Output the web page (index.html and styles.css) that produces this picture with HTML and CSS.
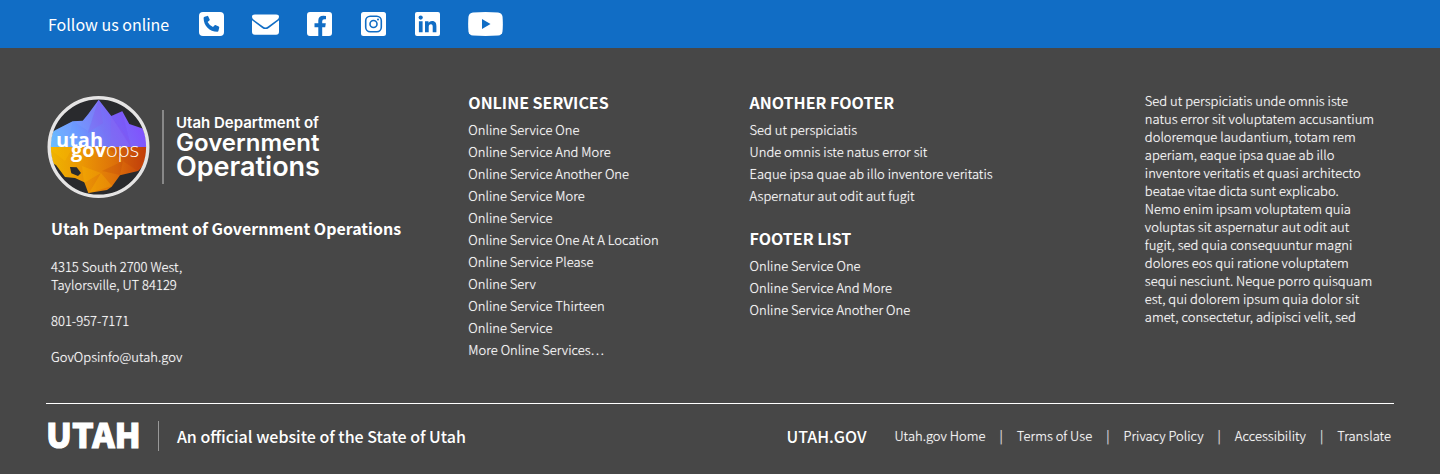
FILE: index.html
```html
<!DOCTYPE html>
<html lang="en">
<head>
<meta charset="utf-8">
<meta name="viewport" content="width=device-width, initial-scale=1">
<title>Utah Department of Government Operations</title>
<link rel="stylesheet" href="styles.css">
</head>
<body>
<footer>
  <section class="social">
    <span class="social-label">Follow us online</span>
    <nav class="social-links" aria-label="Social media">
      <a href="#" aria-label="Phone"><svg width="25" height="24" viewBox="0 0 25 24"><rect width="25" height="24" rx="4" fill="#fff"/><path d="M5.600 4.700 8.300 3.900Q9 3.700 9.300 4.400L10.700 7.600Q10.900 8.200 10.400 8.600L8.600 10Q10.500 13.500 14 15.100L15.400 13.400Q15.800 12.900 16.400 13.100L19.700 14.600Q20.400 15 20.200 15.700L19.400 18.900Q19.200 19.700 18.400 19.700C10.500 19.700 4.600 13.600 4.600 5.900Q4.600 5 5.600 4.700Z" fill="#116dc5"/></svg></a>
      <a href="#" aria-label="Email"><svg width="27" height="21" viewBox="0 0 28 21"><path d="M3 0H25Q28 0 28 2.500Q28 4 26.500 5.300L16.500 12.700Q14 14.500 11.500 12.700L1.500 5.300Q0 4 0 2.500Q0 0 3 0ZM0 6 10.500 14Q14 16.500 17.500 14L28 6V18Q28 21 25 21H3Q0 21 0 18Z" fill="#fff"/></svg></a>
      <a href="#" aria-label="Facebook"><svg width="25" height="24" viewBox="0 0 25 24"><path d="M3 0H22Q25 0 25 3V21Q25 24 22 24H15.200V15.200H18.200L18.800 11.300H15.200V9.200Q15.200 7.200 17.300 7.200H19V4.100Q17.600 3.800 16.300 3.800Q11.300 3.800 11.300 8.600V11.300H7.500V15.200H11.300V24H3Q0 24 0 21V3Q0 0 3 0Z" fill="#fff"/></svg></a>
      <a href="#" aria-label="Instagram"><svg width="25" height="24" viewBox="0 0 25 24"><rect width="25" height="24" rx="2.500" fill="#fff"/><rect x="4.700" y="4.200" width="15.600" height="15.600" rx="4.500" fill="none" stroke="#116dc5" stroke-width="1.600"/><circle cx="12.500" cy="12" r="3.500" fill="none" stroke="#116dc5" stroke-width="1.600"/><circle cx="17" cy="7.600" r="1" fill="#116dc5"/></svg></a>
      <a href="#" aria-label="LinkedIn"><svg width="25" height="24" viewBox="0 0 25 24"><rect width="25" height="24" rx="2" fill="#fff"/><g fill="#116dc5"><circle cx="5.700" cy="5.600" r="2.100"/><path d="M3.900 9.200H7.600V20.300H3.900ZM10 9.200H13.500V10.700Q14.600 8.900 17 8.900C20.600 8.900 21.400 11.200 21.400 14.200V20.300H17.700V14.900C17.700 13.500 17.500 12.200 15.900 12.200C14.200 12.200 13.700 13.400 13.700 14.900V20.300H10Z"/></g></svg></a>
      <a href="#" aria-label="YouTube"><svg width="35" height="24" viewBox="0 0 35 24"><path d="M5 .4Q17.500-.4 30 .4Q34 .8 34.500 4.500Q35.200 12 34.500 19.500Q34 23.200 30 23.600Q17.500 24.400 5 23.600Q1 23.200.5 19.500Q-.2 12 .5 4.500Q1 .8 5 .4Z" fill="#fff"/><path d="M14 7 22.500 12 14 17Z" fill="#116dc5"/></svg></a>
    </nav>
  </section>

  <div class="main">
    <section class="agency">
      <a class="brand" href="#">
        <svg class="emblem" width="103" height="102" viewBox="0 0 103 102" role="img" aria-label="Utah GovOps">
          <defs>
            <linearGradient id="sky" x1="0" y1=".7" x2="1" y2=".5"><stop offset="0" stop-color="#69bdff"/><stop offset=".3" stop-color="#6c98ff"/><stop offset=".55" stop-color="#7775f5"/><stop offset="1" stop-color="#824dff"/></linearGradient>
            <linearGradient id="earth" x1="0" y1="0" x2="1" y2="0"><stop offset="0" stop-color="#efb700"/><stop offset=".35" stop-color="#eb9604"/><stop offset=".65" stop-color="#de7309"/><stop offset="1" stop-color="#c33b0b"/></linearGradient>
            <clipPath id="disc"><circle cx="51.500" cy="51" r="48"/></clipPath>
          </defs>
          <circle cx="51.500" cy="51" r="49" fill="#292a2d"/>
          <g clip-path="url(#disc)">
            <path d="M0 51V39L9 33.700 25.700 25.300 35.700 24.700 41.300 18 51.700 3.700 64.300 20 75.300 15.300 82.300 28 100 34V51Z" fill="url(#sky)"/>
            <path d="M51.700 3.700 41 35 26 25 36 25ZM9 34 26 25 21 44Z" fill="#8ca5ff" opacity=".2"/>
            <path d="M51.700 3.700 56 27 41 37ZM64 20 88 51H63Z" fill="#8a61ef" opacity=".3"/>
            <path d="M75 15 84 51 64 20Z" fill="#713eed" opacity=".2"/>
            <path d="M0 51H102V64L91 75 73 79.300 64.700 90.700 60 94 41.300 97 37.300 86.300 28 82 18 81 9 69 3 66Z" fill="url(#earth)"/>
            <path d="M0 51H26L18 65ZM35 70 54 77 37 87ZM54 77 65 90 42 97Z" fill="#ffc400" opacity=".25"/>
            <path d="M61 52 102 51 91 75 76 65ZM55 75 76 65 73 79Z" fill="#b63708" opacity=".2"/>
            <path d="M23 71 29.700 71.300 34 77 31 80 24.300 77.300Z" fill="#292a2d"/>
          </g>
          <circle cx="51.500" cy="51" r="49.300" fill="none" stroke="#e5e4e4" stroke-width="3.400"/>
          <g class="emblem-text"><text x="9" y="51">utah</text><text x="24" y="61">gov<tspan class="light">ops</tspan></text></g>
        </svg>
        <span class="brand-name"><span class="brand-small">Utah Department of</span><span class="brand-mid">Government</span><span class="brand-large">Operations</span></span>
      </a>
      <div class="contact">
        <h2>Utah Department of Government Operations</h2>
        <address>
          <p>4315 South 2700 West,<br>Taylorsville, UT 84129</p>
          <p>801-957-7171</p>
          <p><a href="mailto:GovOpsinfo@utah.gov">GovOpsinfo@utah.gov</a></p>
        </address>
      </div>
    </section>

    <nav class="links" aria-labelledby="online-services">
      <h2 id="online-services">ONLINE SERVICES</h2>
      <ul>
        <li><a href="#">Online Service One</a></li>
        <li><a href="#">Online Service And More</a></li>
        <li><a href="#">Online Service Another One</a></li>
        <li><a href="#">Online Service More</a></li>
        <li><a href="#">Online Service</a></li>
        <li><a href="#">Online Service One At A Location</a></li>
        <li><a href="#">Online Service Please</a></li>
        <li><a href="#">Online Serv</a></li>
        <li><a href="#">Online Service Thirteen</a></li>
        <li><a href="#">Online Service</a></li>
        <li><a href="#">More Online Services…</a></li>
      </ul>
    </nav>

    <div class="link-stack">
      <nav class="links" aria-labelledby="another-footer">
        <h2 id="another-footer">ANOTHER FOOTER</h2>
        <ul>
          <li><a href="#">Sed ut perspiciatis</a></li>
          <li><a href="#">Unde omnis iste natus error sit</a></li>
          <li><a href="#">Eaque ipsa quae ab illo inventore veritatis</a></li>
          <li><a href="#">Aspernatur aut odit aut fugit</a></li>
        </ul>
      </nav>
      <nav class="links" aria-labelledby="footer-list">
        <h2 id="footer-list">FOOTER LIST</h2>
        <ul>
          <li><a href="#">Online Service One</a></li>
          <li><a href="#">Online Service And More</a></li>
          <li><a href="#">Online Service Another One</a></li>
        </ul>
      </nav>
    </div>

    <p class="about">Sed ut perspiciatis unde omnis iste natus error sit voluptatem accusantium doloremque laudantium, totam rem aperiam, eaque ipsa quae ab illo inventore veritatis et quasi architecto beatae vitae dicta sunt explicabo. Nemo enim ipsam voluptatem quia voluptas sit aspernatur aut odit aut fugit, sed quia consequuntur magni dolores eos qui ratione voluptatem sequi nesciunt. Neque porro quisquam est, qui dolorem ipsum quia dolor sit amet, consectetur, adipisci velit, sed</p>
  </div>

  <div class="bottom">
    <a class="utah" href="#">UTAH</a>
    <span class="official">An official website of the State of Utah</span>
    <nav class="legal" aria-label="Utah.gov">
      <a class="portal" href="#">UTAH.GOV</a>
      <ul>
        <li><a href="#">Utah.gov Home</a></li>
        <li><a href="#">Terms of Use</a></li>
        <li><a href="#">Privacy Policy</a></li>
        <li><a href="#">Accessibility</a></li>
        <li><a href="#">Translate</a></li>
      </ul>
    </nav>
  </div>
</footer>
</body>
</html>
```
FILE: styles.css
```css
* { box-sizing: border-box; }
body {
  margin: 0;
  background: #474747;
  color: #fff;
  font: 300 13px/18px "Noto Sans CJK SC", "Noto Sans", sans-serif;
}
a { color: inherit; text-decoration: none; }
h2, p, ul { margin: 0; padding: 0; }
ul { list-style: none; }
svg { display: block; }

.social {
  display: flex;
  align-items: center;
  gap: 29px;
  min-height: 48px;
  padding: 0 48px;
  background: #116dc5;
}
.social-label { font-size: 16px; line-height: 24px; font-weight: 400; }
.social-links { display: flex; align-items: center; gap: 27px; }
.social-links a { display: flex; justify-content: center; min-width: 27px; }

.main {
  display: grid;
  grid-template-columns: 421fr 281fr 396fr 249fr;
  margin: 0 46px;
  padding: 44px 0 37px;
  border-bottom: 1px solid #fff;
}
.brand { display: flex; align-items: center; gap: 12px; padding: 4px 0 0 1px; }
.brand-name {
  display: flex;
  flex-direction: column;
  padding: 4px 0 4px 12px;
  border-left: 2px solid #888;
  font-family: Inter, sans-serif;
  font-weight: 600;
}
.brand-small { font-size: 15px; line-height: 18px; }
.brand-mid { font-size: 24px; line-height: 22px; }
.brand-large { font-size: 27px; line-height: 26px; }
.emblem-text { fill: #fff; font: 700 20px "Open Sans", sans-serif; }
.emblem-text .light { font-weight: 300; }

.contact { padding: 18px 0 0 5px; }
h2 { font-size: 16px; line-height: 24px; font-weight: 700; }
address { display: grid; gap: 18px; margin-top: 18px; font-style: normal; }
address, .about, li { text-shadow: 0 0 1px rgba(255, 255, 255, .5); }
.links { padding-left: 1px; }
.links li { line-height: 22px; }
.links ul { margin-top: 7px; }
.links h2 { line-height: 20px; }
.link-stack { display: flex; flex-direction: column; gap: 21px; }
.about { padding-right: 18px; }

.bottom { display: flex; align-items: center; margin: 0 49px 0 46px; padding-top: 17px; }
.utah {
  padding: 0 17px 4px 0;
  border-right: 1px solid #999;
  font-size: 34px;
  line-height: 26px;
  font-weight: 900;
  -webkit-text-stroke: 1px #fff;
}
.official { padding-left: 18px; font-size: 16px; line-height: 24px; font-weight: 500; }
.legal { display: flex; align-items: center; gap: 28px; margin-left: auto; }
.portal { font-size: 16px; line-height: 24px; font-weight: 500; }
.legal ul { display: flex; }
.legal li + li::before { content: "|"; padding: 0 14px; }
```
